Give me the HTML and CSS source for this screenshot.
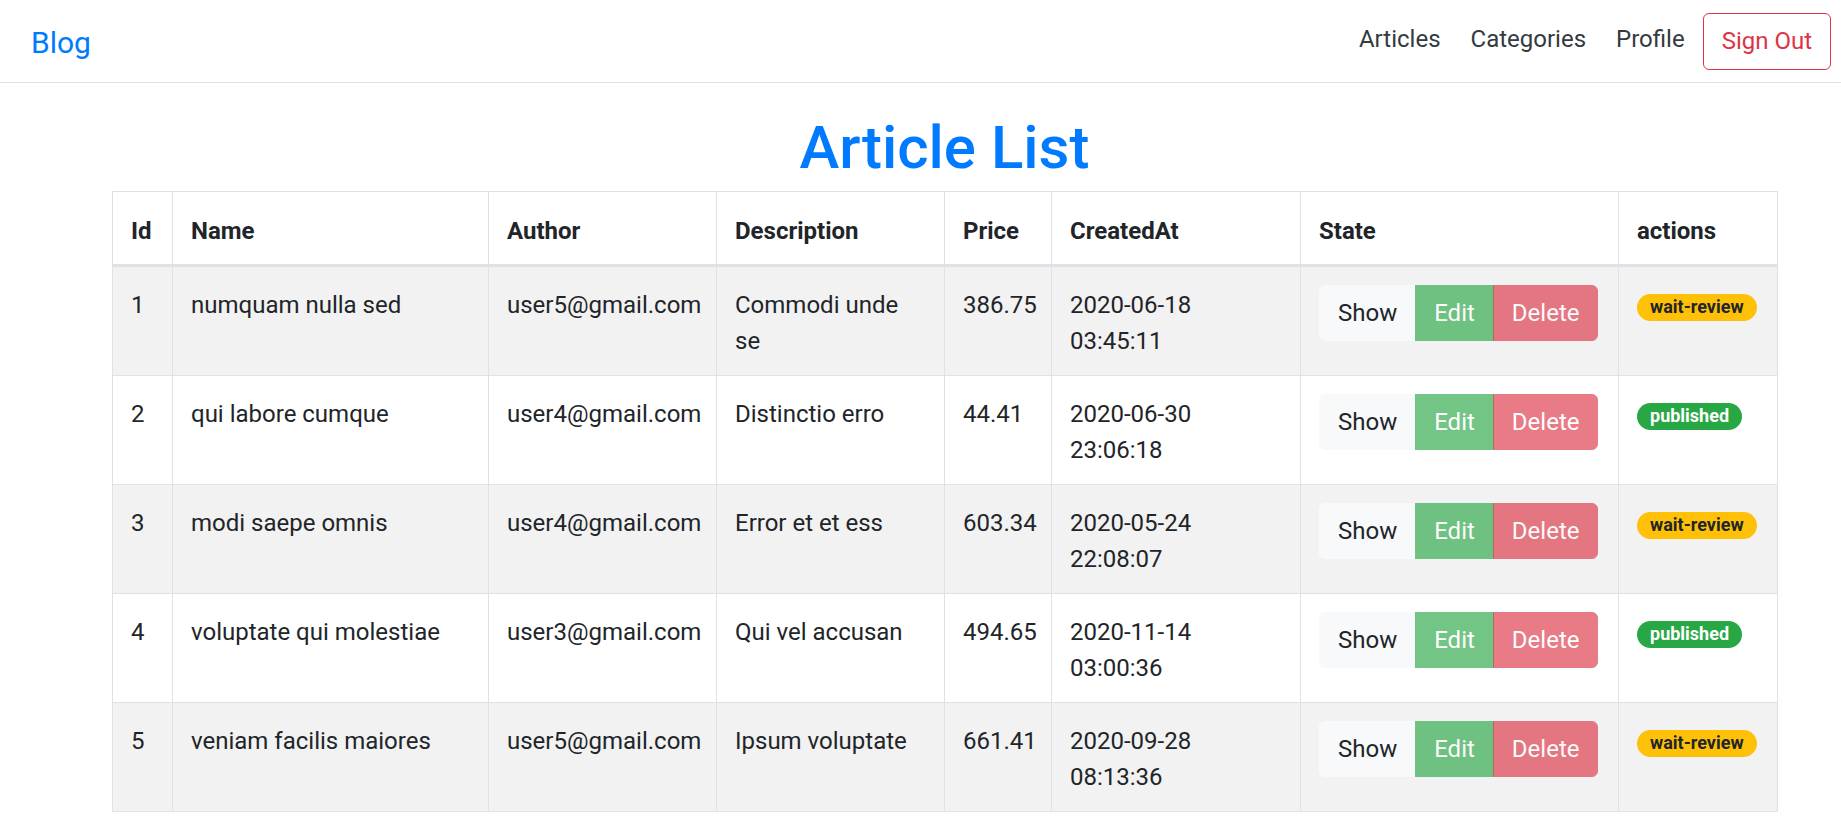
FILE: index.html
```html
<!DOCTYPE html>
<html lang="en">
<head>
<meta charset="utf-8">
<title>Article List</title>
<link rel="stylesheet" href="styles.css">
</head>
<body>
<nav class="navbar">
  <a class="brand" href="#">Blog</a>
  <div class="nav-right">
    <a class="nav-link" href="#">Articles</a>
    <a class="nav-link" href="#">Categories</a>
    <a class="nav-link" href="#">Profile</a>
    <button class="btn btn-outline-danger">Sign Out</button>
  </div>
</nav>
<main class="container">
  <h1 class="title">Article List</h1>
  <table class="table">
    <colgroup>
      <col class="c-id"><col class="c-name"><col class="c-author"><col class="c-desc">
      <col class="c-price"><col class="c-created"><col class="c-state"><col class="c-actions">
    </colgroup>
    <thead>
      <tr><th>Id</th><th>Name</th><th>Author</th><th>Description</th><th>Price</th><th>CreatedAt</th><th>State</th><th>actions</th></tr>
    </thead>
    <tbody>
      <tr>
        <td>1</td><td>numquam nulla sed</td><td class="nowrap">user5@gmail.com</td><td>Commodi unde se</td><td class="nowrap">386.75</td><td>2020-06-18 03:45:11</td>
        <td><div class="btn-group"><button class="btn btn-light">Show</button><button class="btn btn-success" disabled>Edit</button><button class="btn btn-danger" disabled>Delete</button></div></td>
        <td><span class="badge badge-warning">wait-review</span></td>
      </tr>
      <tr>
        <td>2</td><td>qui labore cumque</td><td class="nowrap">user4@gmail.com</td><td>Distinctio erro</td><td class="nowrap">44.41</td><td>2020-06-30 23:06:18</td>
        <td><div class="btn-group"><button class="btn btn-light">Show</button><button class="btn btn-success" disabled>Edit</button><button class="btn btn-danger" disabled>Delete</button></div></td>
        <td><span class="badge badge-success">published</span></td>
      </tr>
      <tr>
        <td>3</td><td>modi saepe omnis</td><td class="nowrap">user4@gmail.com</td><td>Error et et ess</td><td class="nowrap">603.34</td><td>2020-05-24 22:08:07</td>
        <td><div class="btn-group"><button class="btn btn-light">Show</button><button class="btn btn-success" disabled>Edit</button><button class="btn btn-danger" disabled>Delete</button></div></td>
        <td><span class="badge badge-warning">wait-review</span></td>
      </tr>
      <tr>
        <td>4</td><td>voluptate qui molestiae</td><td class="nowrap">user3@gmail.com</td><td>Qui vel accusan</td><td class="nowrap">494.65</td><td>2020-11-14 03:00:36</td>
        <td><div class="btn-group"><button class="btn btn-light">Show</button><button class="btn btn-success" disabled>Edit</button><button class="btn btn-danger" disabled>Delete</button></div></td>
        <td><span class="badge badge-success">published</span></td>
      </tr>
      <tr>
        <td>5</td><td>veniam facilis maiores</td><td class="nowrap">user5@gmail.com</td><td>Ipsum voluptate</td><td class="nowrap">661.41</td><td>2020-09-28 08:13:36</td>
        <td><div class="btn-group"><button class="btn btn-light">Show</button><button class="btn btn-success" disabled>Edit</button><button class="btn btn-danger" disabled>Delete</button></div></td>
        <td><span class="badge badge-warning">wait-review</span></td>
      </tr>
    </tbody>
  </table>
</main>
</body>
</html>
```
FILE: styles.css
```css
* { box-sizing: border-box; }
html, body { margin: 0; padding: 0; }
body {
  font-family: Roboto, "Liberation Sans", sans-serif;
  font-size: 24px;
  line-height: 1.5;
  color: #212529;
  background: #fff;
}
a { text-decoration: none; }

.navbar {
  display: flex;
  align-items: center;
  justify-content: space-between;
  height: 83px;
  padding: 0 10px 0 31px;
  border-bottom: 1px solid #dee2e6;
}
.brand {
  font-size: 30px;
  line-height: 1.5;
  padding-top: 2px;
  color: #007bff;
}
.nav-right {
  display: flex;
  align-items: center;
  gap: 6px;
}
.nav-link {
  color: #343a40;
  padding: 9px 12px 13px;
  line-height: 36px;
}

.btn {
  font-family: inherit;
  font-size: 24px;
  line-height: 36px;
  padding: 9px 18px;
  border: 1px solid transparent;
  border-radius: 6px;
  background: transparent;
  color: #212529;
  cursor: pointer;
}
.btn-outline-danger {
  color: #dc3545;
  border: 1.5px solid #dc3545;
  height: 57px;
}
.btn-light { background: #f8f9fa; border-color: #f8f9fa; color: #212529; }
.btn-success { background: #28a745; border-color: #28a745; color: #fff; }
.btn-danger { background: #dc3545; border-color: #dc3545; color: #fff; }
.btn:disabled { opacity: .65; cursor: default; }

.btn-group { display: inline-flex; vertical-align: top; }
.btn-group .btn { border-radius: 0; }
.btn-group .btn + .btn { margin-left: -1px; }
.btn-group .btn:first-child { border-radius: 6px 0 0 6px; }
.btn-group .btn:last-child { border-radius: 0 6px 6px 0; }

.container {
  width: 1665px;
  margin-left: 112px;
}
.title {
  margin: 29px 0 7px;
  font-size: 60px;
  font-weight: 500;
  line-height: 1.2;
  text-align: center;
  color: #007bff;
}

.table {
  width: 1665px;
  table-layout: fixed;
  border-collapse: collapse;
  border: 1px solid #dee2e6;
}
.c-id { width: 60px; }
.c-name { width: 316px; }
.c-author { width: 228px; }
.c-desc { width: 228px; }
.c-price { width: 107px; }
.c-created { width: 249px; }
.c-state { width: 318px; }
.c-actions { width: 159px; }

.table th, .table td {
  border: 1px solid #dee2e6;
  text-align: left;
  vertical-align: top;
}
.table th {
  font-weight: 700;
  vertical-align: bottom;
  padding: 21px 18px 15px;
}
.table thead th { border-bottom: 3px solid #dee2e6; }
.table td { padding: 20px 18px 16px; }
.table td .btn-group { margin-top: -2px; margin-bottom: 2px; }
.table tbody tr:nth-child(odd) { background: #f2f2f2; }
.nowrap { white-space: nowrap; }

.badge {
  display: inline-block;
  font-size: 18px;
  font-weight: 700;
  line-height: 1;
  padding: 4.5px 13px;
  border-radius: 15px;
  vertical-align: baseline;
}
.badge-warning { background: #ffc107; color: #212529; }
.badge-success { background: #28a745; color: #fff; }
```
